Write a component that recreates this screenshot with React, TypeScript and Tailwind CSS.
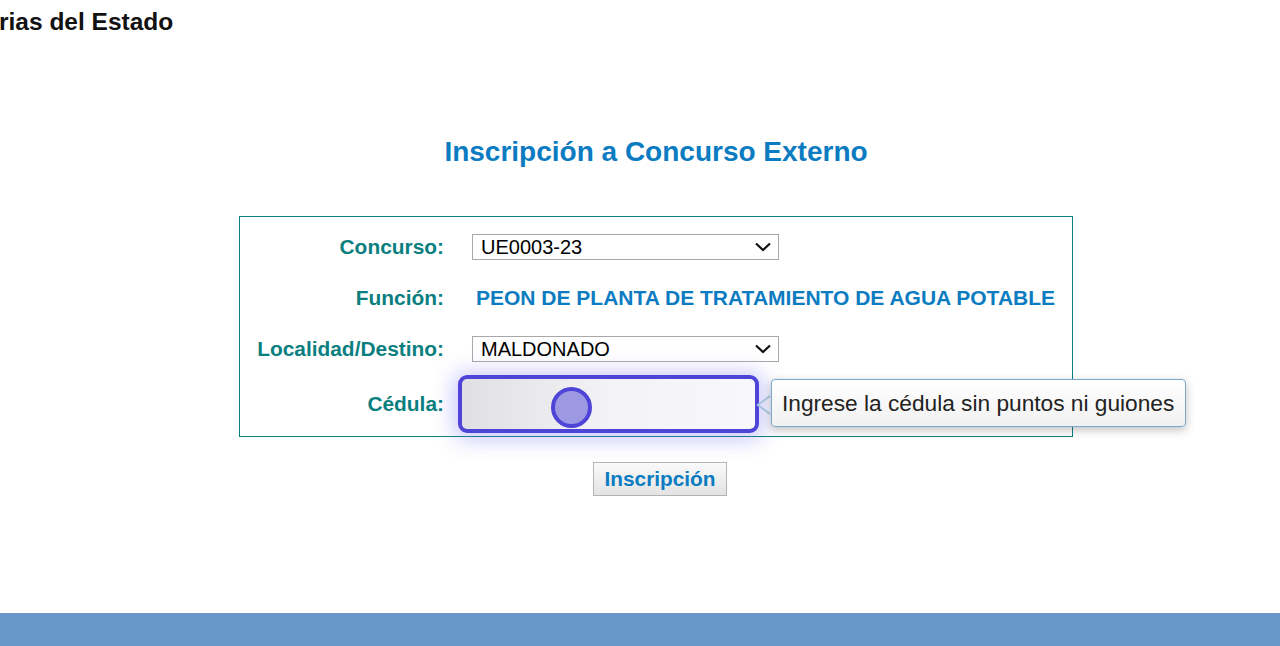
import React from 'react';

const labelCls = "w-[204px] shrink-0 text-right text-[20.9px] font-bold text-[#0b7f7f]";

function Chevron() {
  return (
    <svg width="18" height="12" viewBox="0 0 18 12" className="shrink-0">
      <path d="M2 2.5 L9 9 L16 2.5" fill="none" stroke="#111" strokeWidth="2.2" />
    </svg>
  );
}

function FakeSelect({ value }: { value: string }) {
  return (
    <div className="ml-[28px] w-[307px] h-[26px] border border-[#a9a9a9] bg-white flex items-center justify-between pl-[8px] pr-[6px]">
      <span className="text-[20px] leading-none text-black">{value}</span>
      <Chevron />
    </div>
  );
}

export default function App() {
  return (
    <div className="w-[1280px] h-[646px] bg-white flex flex-col overflow-hidden" style={{ fontFamily: '"Liberation Sans", Arial, sans-serif' }}>
      <div className="h-[48px] pt-[10px] -ml-[1px]">
        <span className="text-[24.5px] font-bold text-[#111] leading-none">rias del Estado</span>
      </div>

      <div className="flex flex-col items-center ml-[32px]">
        <h1 className="mt-[90px] text-[28px] font-bold text-[#0b7cc1] leading-none">Inscripción a Concurso Externo</h1>

        <div className="mt-[50px] w-[834px] border border-[#0b8080] flex flex-col pt-[4px] pb-[2px]">
          <div className="h-[51px] flex items-center">
            <span className={labelCls}>Concurso:</span>
            <FakeSelect value="UE0003-23" />
          </div>
          <div className="h-[51px] flex items-center">
            <span className={labelCls}>Función:</span>
            <span className="ml-[32px] text-[21px] font-bold text-[#0b7cc1]">PEON DE PLANTA DE TRATAMIENTO DE AGUA POTABLE</span>
          </div>
          <div className="h-[51px] flex items-center">
            <span className={labelCls}>Localidad/Destino:</span>
            <FakeSelect value="MALDONADO" />
          </div>
          <div className="h-[60px] flex items-center">
            <span className={labelCls}>Cédula:</span>
            <div className="relative ml-[14px]">
              <div className="w-[301px] h-[58px] rounded-[9px] border-[4px] border-[#4e45d8] bg-gradient-to-r from-[#e0e0e2] via-[#f3f3f5] to-[#f8f8fa] shadow-[0_2px_20px_5px_rgba(110,100,240,0.35)]" />
              <div className="absolute left-[93px] top-[12px] w-[41px] h-[41px] rounded-full border-[4px] border-[#4e45d8] bg-[#9c98e2]" />
              <svg className="absolute left-[297px] top-[18px]" width="16" height="24" viewBox="0 0 16 24">
                <path d="M15 3 L3 12 L15 21" fill="none" stroke="#a9c6de" strokeWidth="2" />
              </svg>
              <div className="absolute left-[313px] top-[4px] h-[48px] w-[415px] rounded-[4px] border border-[#7aa7c9] bg-gradient-to-b from-white to-[#f1f1f1] shadow-[0_3px_10px_rgba(0,0,0,0.25)] flex items-center pl-[10px] whitespace-nowrap">
                <span className="text-[22.7px] text-[#222]">Ingrese la cédula sin puntos ni guiones</span>
              </div>
            </div>
          </div>
        </div>

        <button className="mt-[25px] ml-[8px] h-[34px] px-[11px] border border-[#b4b4b4] bg-gradient-to-b from-[#fafafa] to-[#e3e3e3] text-[20.8px] font-bold text-[#0b7cc1] leading-none">
          Inscripción
        </button>
      </div>

      <div className="mt-auto h-[33px] bg-[#6897c9]" />
    </div>
  );
}
